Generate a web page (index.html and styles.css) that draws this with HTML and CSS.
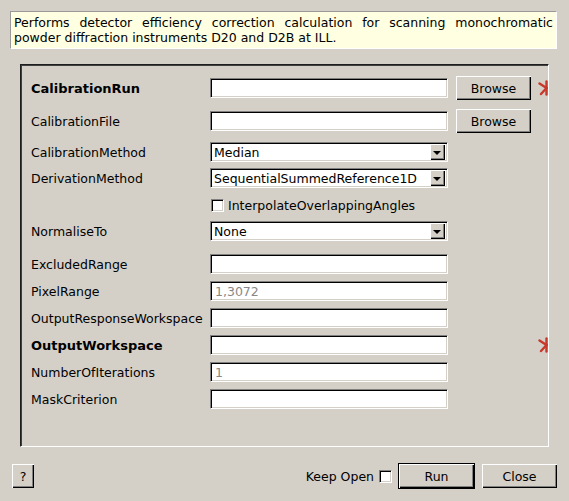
FILE: index.html
```html
<!DOCTYPE html>
<html>
<head>
<meta charset="utf-8">
<link rel="stylesheet" href="styles.css">
</head>
<body>
<div class="dialog">
  <p class="desc">Performs detector efficiency correction calculation for scanning monochromatic powder diffraction instruments D20 and D2B at ILL.</p>
  <div class="frame">
    <div class="form">
      <div class="row row--button">
        <span class="lbl bold">CalibrationRun</span>
        <span class="field"></span>
        <button class="btn browse">Browse</button>
        <span class="star"><svg width="10" height="16" viewBox="0 0 10 16"><g stroke="#c8382a" stroke-width="2.4" stroke-linecap="round"><line x1="8.5" y1="1.5" x2="8.5" y2="14.5"/><line x1="8.5" y1="8" x2="1.5" y2="3.5"/><line x1="8.5" y1="8" x2="3" y2="14"/></g></svg></span>
      </div>
      <div class="row row--button row--loose">
        <span class="lbl">CalibrationFile</span>
        <span class="field"></span>
        <button class="btn browse">Browse</button>
      </div>
      <div class="row row--loose">
        <span class="lbl">CalibrationMethod</span>
        <span class="combo"><span class="combo-text">Median</span><span class="combo-arrow"></span></span>
      </div>
      <div class="row row--tight">
        <span class="lbl">DerivationMethod</span>
        <span class="combo"><span class="combo-text">SequentialSummedReference1D</span><span class="combo-arrow"></span></span>
      </div>
      <div class="row">
        <span class="lbl"></span>
        <span class="check-wrap"><span class="checkbox"></span><span class="check-text">InterpolateOverlappingAngles</span></span>
      </div>
      <div class="row row--tight">
        <span class="lbl">NormaliseTo</span>
        <span class="combo"><span class="combo-text">None</span><span class="combo-arrow"></span></span>
      </div>
      <div class="row row--section">
        <span class="lbl">ExcludedRange</span>
        <span class="field"></span>
      </div>
      <div class="row">
        <span class="lbl">PixelRange</span>
        <span class="field field--placeholder">1,3072</span>
      </div>
      <div class="row">
        <span class="lbl">OutputResponseWorkspace</span>
        <span class="field"></span>
      </div>
      <div class="row">
        <span class="lbl bold">OutputWorkspace</span>
        <span class="field"></span>
        <span class="star"><svg width="10" height="16" viewBox="0 0 10 16"><g stroke="#c8382a" stroke-width="2.4" stroke-linecap="round"><line x1="8.5" y1="1.5" x2="8.5" y2="14.5"/><line x1="8.5" y1="8" x2="1.5" y2="3.5"/><line x1="8.5" y1="8" x2="3" y2="14"/></g></svg></span>
      </div>
      <div class="row">
        <span class="lbl">NumberOfIterations</span>
        <span class="field field--placeholder">1</span>
      </div>
      <div class="row">
        <span class="lbl">MaskCriterion</span>
        <span class="field"></span>
      </div>
    </div>
  </div>
  <div class="footer">
    <button class="btn help">?</button>
    <span class="spacer"></span>
    <span class="keep-text">Keep Open</span>
    <span class="checkbox keep-box"></span>
    <button class="btn run">Run</button>
    <button class="btn close">Close</button>
  </div>
</div>
</body>
</html>
```
FILE: styles.css
```css
html, body {
  margin: 0;
  padding: 0;
  background: #d4d0c8;
}
body {
  font-family: "DejaVu Sans", "Liberation Sans", sans-serif;
  font-size: 12.5px;
  color: #000;
  width: 569px;
  height: 501px;
  overflow: hidden;
}
.dialog {
  display: flex;
  flex-direction: column;
}
.desc {
  margin: 11px 12px 0 10px;
  width: 547px;
  box-sizing: border-box;
  padding: 3px 3px 3px 3px;
  background: #ffffe1;
  border: 1px solid;
  border-color: #9a9a9a #ffffff #ffffff #9a9a9a;
  line-height: 15px;
  text-align: justify;
}
.frame {
  margin: 15px 0 0 20px;
  width: 529px;
  height: 383px;
  box-sizing: border-box;
  border: 1px solid;
  border-color: #1e1e1e #ffffff #ffffff #1e1e1e;
  box-shadow: inset 1px 1px 0 #404040;
  overflow: hidden;
}
.form {
  display: flex;
  flex-direction: column;
  gap: 7px;
  padding: 11px 0 0 10px;
}
.row {
  display: grid;
  grid-template-columns: 179px 238px 83px 17px;
  align-items: center;
  height: 20px;
}
.row--button { height: 24px; }
.row--loose { margin-top: 2px; }
.row--tight { margin-top: -1px; }
.row--section { margin-top: 6px; }
.lbl {
  grid-column: 1;
  white-space: nowrap;
  padding-top: 1px;
}
.bold {
  font-weight: bold;
  font-size: 13px;
}
.field, .combo {
  grid-column: 2;
  display: flex;
  align-items: center;
  height: 20px;
  box-sizing: border-box;
  background: #fff;
  border: 1px solid;
  border-color: #808080 #ffffff #ffffff #808080;
  box-shadow: inset 1px 1px 0 #000, inset -1px -1px 0 #d4d0c8;
  padding-left: 4px;
}
.field--placeholder { color: #888; }
.combo { padding: 0 2px 0 3px; }
.combo-text {
  flex: 1;
  white-space: nowrap;
}
.combo-arrow {
  width: 15px;
  height: 16px;
  box-sizing: border-box;
  background: #d4d0c8;
  box-shadow: inset 1px 1px 0 #fff, inset -1px -1px 0 #000, inset -2px -2px 0 #808080;
  display: flex;
  align-items: center;
  justify-content: center;
}
.combo-arrow::after {
  content: "";
  display: block;
  width: 0;
  height: 0;
  margin: 1px 1px 0 0;
  border-left: 4px solid transparent;
  border-right: 4px solid transparent;
  border-top: 4px solid #000;
}
.btn {
  font-family: "DejaVu Sans", "Liberation Sans", sans-serif;
  font-size: 12.5px;
  color: #000;
  background: #d4d0c8;
  border: none;
  padding: 0;
  margin: 0;
  box-sizing: border-box;
  box-shadow: inset 1px 1px 0 #fff, inset -1px -1px 0 #000, inset -2px -2px 0 #808080;
}
.browse {
  grid-column: 3;
  justify-self: end;
  width: 75px;
  height: 24px;
}
.star {
  grid-column: 4;
  justify-self: end;
  width: 10px;
  height: 16px;
  display: flex;
}
.check-wrap {
  grid-column: 2 / span 2;
  display: flex;
  align-items: center;
  padding-left: 1px;
}
.checkbox {
  display: inline-block;
  width: 13px;
  height: 13px;
  box-sizing: border-box;
  background: #fff;
  border: 1px solid;
  border-color: #808080 #ffffff #ffffff #808080;
  box-shadow: inset 1px 1px 0 #000, inset -1px -1px 0 #d4d0c8;
  flex: none;
}
.check-text {
  margin-left: 4px;
  white-space: nowrap;
}
.footer {
  display: flex;
  align-items: center;
  margin-top: 16px;
  padding: 0 12px;
  height: 26px;
}
.help {
  width: 22px;
  height: 24px;
}
.spacer { flex: 1; }
.keep-text { white-space: nowrap; }
.keep-box { margin-left: 5px; }
.run {
  margin-left: 6px;
  width: 77px;
  height: 26px;
  border: 1px solid #000;
}
.close {
  margin-left: 7px;
  width: 75px;
  height: 24px;
}
```
